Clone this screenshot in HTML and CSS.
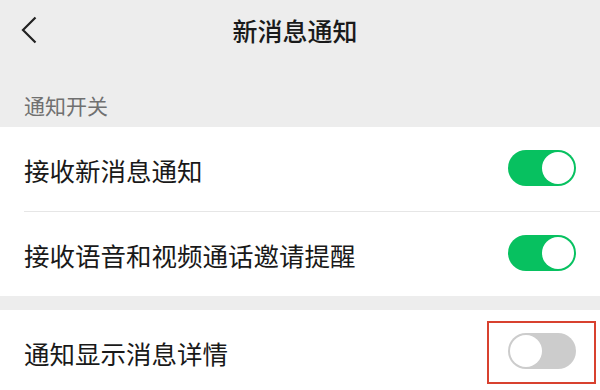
FILE: index.html
```html
<!DOCTYPE html>
<html lang="zh-CN">
<head>
    <meta charset="UTF-8">
    <meta name="viewport" content="width=device-width, initial-scale=1.0">
    <title>新消息通知</title>
    <link rel="stylesheet" href="styles.css">
</head>
<body>
    <div class="header">
        <span class="back">
            <svg width="16" height="28" viewBox="0 0 16 28">
                <polyline points="14.5,1.5 2,14 14.5,26.5" fill="none" stroke="#222" stroke-width="2.2"/>
            </svg>
        </span>
        <h1>新消息通知</h1>
        <span></span>
    </div>

    <div class="label">通知开关</div>

    <div class="group">
        <div class="cell">
            <span>接收新消息通知</span>
            <span class="switch on"><i></i></span>
        </div>
        <div class="cell">
            <span>接收语音和视频通话邀请提醒</span>
            <span class="switch on"><i></i></span>
        </div>
    </div>

    <div class="group second">
        <div class="cell">
            <span>通知显示消息详情</span>
            <span class="switch mark"><i></i></span>
        </div>
    </div>
</body>
</html>
```

FILE: styles.css
```css
body {
    margin: 0;
    background-color: #ededed;
    font-family: "Noto Sans CJK SC", "Noto Sans", sans-serif;
    color: #191919;
    overflow: hidden;
}
.header {
    height: 60px;
    display: grid;
    grid-template-columns: 60px 1fr 60px;
    align-items: center;
}
.back {
    padding-left: 21px;
    display: flex;
    align-items: center;
}
.header h1 {
    margin: 0 10px 0 0;
    text-align: center;
    font-size: 25px;
    font-weight: 500;
    color: #1a1a1a;
}
.label {
    padding: 35px 24px 12px;
    font-size: 21px;
    line-height: 20px;
    color: #707070;
}
.group {
    background-color: #fff;
}
.group.second {
    margin-top: 14px;
}
.cell {
    margin-left: 24px;
    padding-right: 24px;
    height: 84px;
    display: flex;
    align-items: center;
    justify-content: space-between;
    font-size: 25.5px;
}
.cell + .cell {
    border-top: 1px solid #e6e6e6;
}
.switch {
    width: 68px;
    height: 36px;
    padding: 2px;
    box-sizing: border-box;
    border-radius: 18px;
    background-color: #cccccc;
    display: flex;
    position: relative;
    margin-top: -3px;
}
.switch i {
    width: 32px;
    height: 32px;
    border-radius: 50%;
    background-color: #fff;
}
.switch.on {
    background-color: #07c160;
    justify-content: flex-end;
}
.switch.mark::after {
    content: "";
    position: absolute;
    top: -12px;
    bottom: -15px;
    left: -21px;
    right: -20px;
    border: 2px solid #d8412f;
}
```
